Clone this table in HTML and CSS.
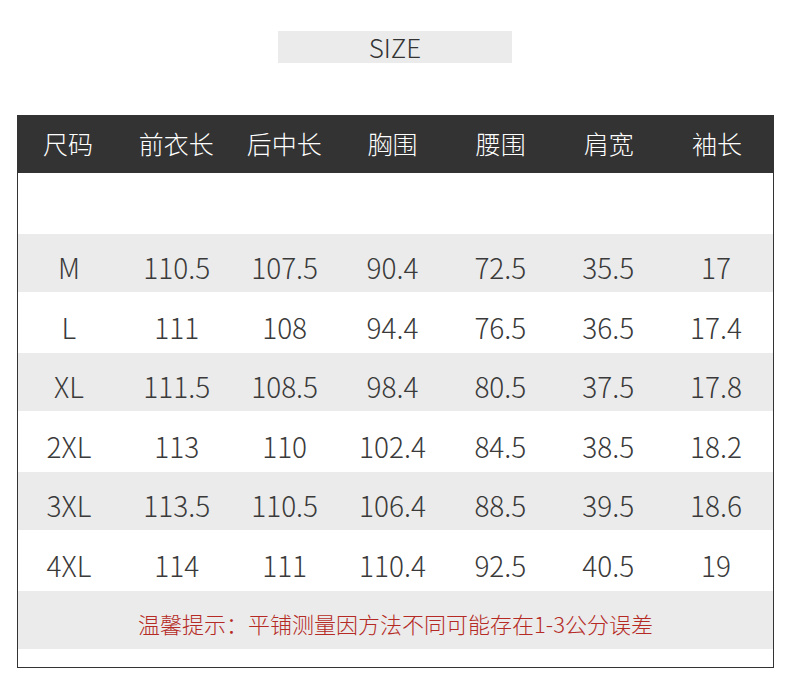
FILE: index.html
```html
<!DOCTYPE html>
<html lang="zh-CN">
<head>
<meta charset="utf-8">
<title>SIZE</title>
<link rel="stylesheet" href="styles.css">
</head>
<body>
<div class="page">
  <div class="title">SIZE</div>
  <div class="table">
    <div class="row head">
      <div>尺码</div><div>前衣长</div><div>后中长</div><div>胸围</div><div>腰围</div><div>肩宽</div><div>袖长</div>
    </div>
    <div class="body">
      <div class="blank"></div>
      <div class="row gray"><div>M</div><div>110.5</div><div>107.5</div><div>90.4</div><div>72.5</div><div>35.5</div><div>17</div></div>
      <div class="row white"><div>L</div><div>111</div><div>108</div><div>94.4</div><div>76.5</div><div>36.5</div><div>17.4</div></div>
      <div class="row gray"><div>XL</div><div>111.5</div><div>108.5</div><div>98.4</div><div>80.5</div><div>37.5</div><div>17.8</div></div>
      <div class="row white"><div>2XL</div><div>113</div><div>110</div><div>102.4</div><div>84.5</div><div>38.5</div><div>18.2</div></div>
      <div class="row gray"><div>3XL</div><div>113.5</div><div>110.5</div><div>106.4</div><div>88.5</div><div>39.5</div><div>18.6</div></div>
      <div class="row white"><div>4XL</div><div>114</div><div>111</div><div>110.4</div><div>92.5</div><div>40.5</div><div>19</div></div>
      <div class="note">温馨提示：平铺测量因方法不同可能存在1-3公分误差</div>
    </div>
  </div>
</div>
</body>
</html>
```

FILE: styles.css
```css
html, body {
  margin: 0;
  padding: 0;
  background: #ffffff;
}

body {
  font-family: "Noto Sans CJK SC", "Noto Sans", sans-serif;
  color: #333333;
}

.page {
  width: 790px;
  padding-top: 31px;
}

.title {
  width: 234px;
  height: 32px;
  margin: 0 auto;
  background: #ebebeb;
  display: flex;
  align-items: center;
  justify-content: center;
  font-size: 26px;
  font-weight: 300;
  color: #333333;
  line-height: 32px;
  padding-top: 0;
  box-sizing: border-box;
}

.table {
  margin: 52px 0 0 17px;
  width: 757px;
}

.row {
  display: grid;
  grid-template-columns: repeat(7, 1fr);
  align-items: center;
}

.row > div {
  text-align: center;
  padding-right: 6px;
}

.head {
  height: 58px;
  background: #333333;
  color: #ffffff;
  font-size: 25px;
  font-weight: 300;
  box-sizing: border-box;
  padding-bottom: 3px;
}

.body {
  border: 1px solid #333333;
  border-top: none;
  padding-bottom: 18px;
}

.blank {
  height: 61px;
}

.gray,
.white {
  font-size: 28px;
  font-weight: 300;
  color: #3a3a3a;
  box-sizing: border-box;
  padding-top: 8px;
}

.gray {
  height: 58px;
  background: #ebebeb;
}

.white {
  height: 61px;
  background: #ffffff;
}

.note {
  height: 58px;
  background: #ebebeb;
  color: #b52a24;
  font-size: 22px;
  font-weight: 300;
  display: flex;
  align-items: center;
  justify-content: center;
  box-sizing: border-box;
  padding-top: 5px;
}
```
